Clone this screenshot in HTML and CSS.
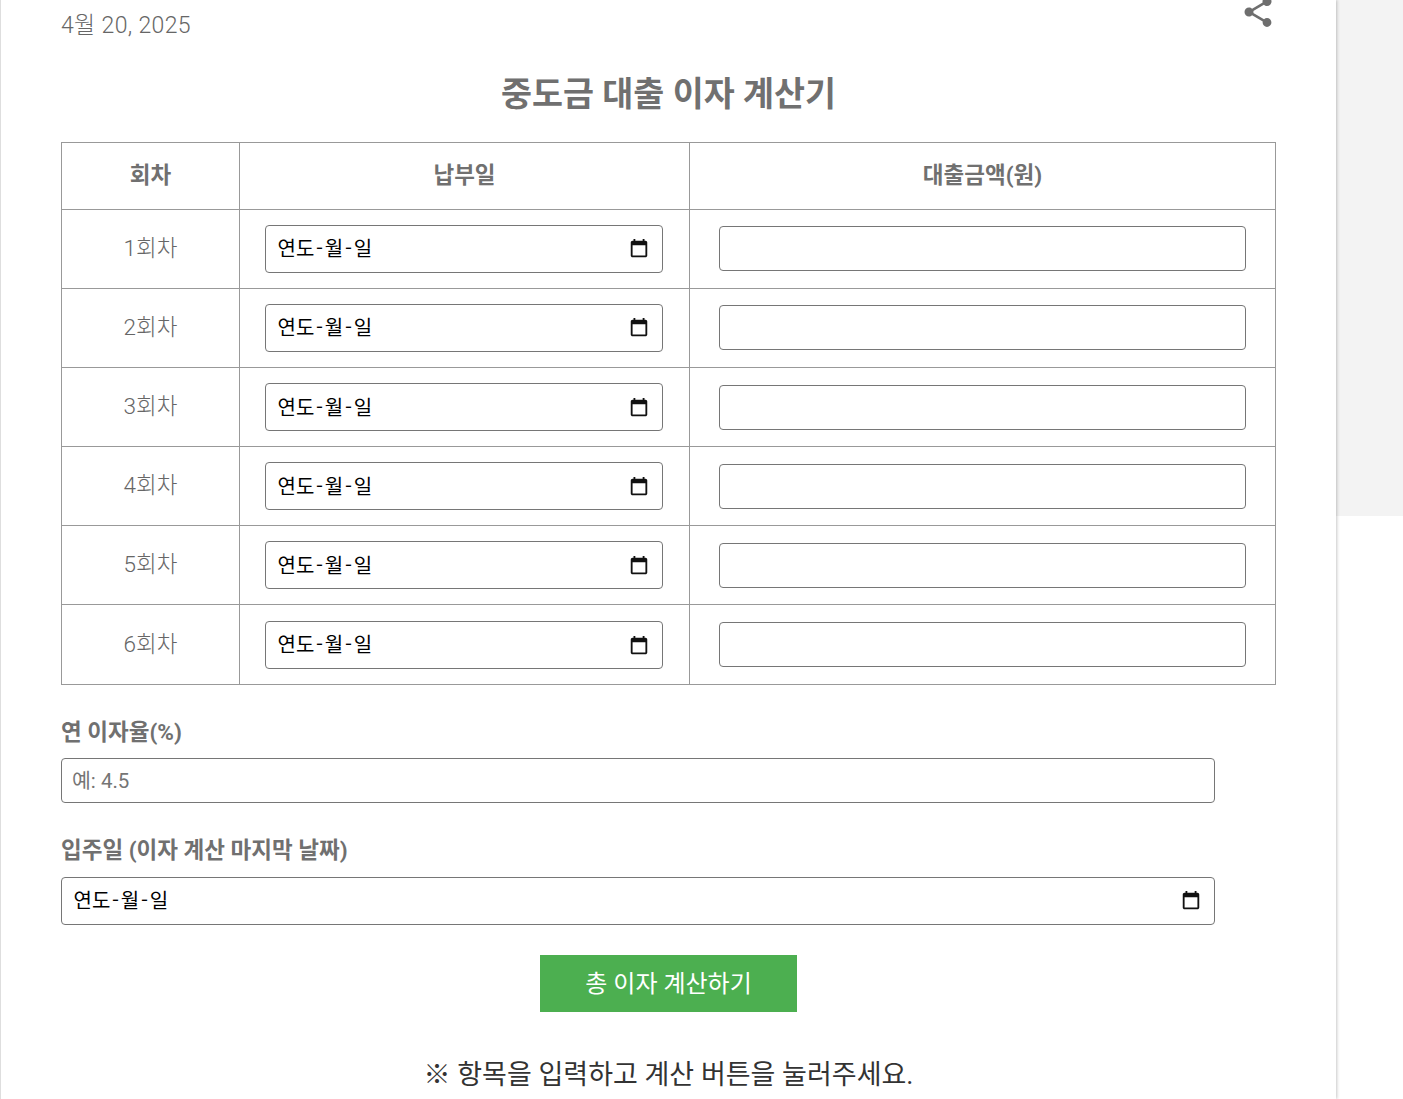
FILE: index.html
```html
<!DOCTYPE html>
<html lang="ko">
<head>
<meta charset="utf-8">
<title>중도금 대출 이자 계산기</title>
<link rel="stylesheet" href="styles.css">
</head>
<body>
<svg class="sprite" width="0" height="0" aria-hidden="true">
  <symbol id="cal" viewBox="0 0 24 24"><path d="M19 3h-1V1h-2v2H8V1H6v2H5c-1.11 0-2 .9-2 2v14c0 1.1.89 2 2 2h14c1.1 0 2-.9 2-2V5c0-1.1-.9-2-2-2zm0 16H5V8h14v11z"/></symbol>
</svg>
<div class="layout">
  <main class="post">
    <header class="post-head">
      <span class="post-date">4월 20, 2025</span>
      <svg class="share" viewBox="0 0 24 24"><path d="M18 16.08c-.76 0-1.44.3-1.96.77L8.91 12.7c.05-.23.09-.46.09-.7s-.04-.47-.09-.7l7.05-4.11c.54.5 1.25.81 2.04.81 1.66 0 3-1.34 3-3s-1.34-3-3-3-3 1.34-3 3c0 .24.04.47.09.7L8.04 9.81C7.5 9.31 6.79 9 6 9c-1.66 0-3 1.34-3 3s1.34 3 3 3c.79 0 1.5-.31 2.04-.81l7.12 4.16c-.05.21-.08.43-.08.65 0 1.61 1.31 2.92 2.92 2.92 1.61 0 2.92-1.31 2.92-2.92s-1.31-2.92-2.92-2.92z"/></svg>
    </header>
    <h2 class="calc-title">중도금 대출 이자 계산기</h2>
    <table class="calc-table">
      <colgroup><col class="c1"><col class="c2"><col class="c3"></colgroup>
      <thead>
        <tr><th>회차</th><th>납부일</th><th>대출금액(원)</th></tr>
      </thead>
      <tbody>
        <tr><td class="round">1회차</td><td><div class="date-field"><span class="date-text">연도<i class="sep">-</i>월<i class="sep">-</i>일</span><svg class="cal"><use href="#cal"/></svg></div></td><td><input class="text-field" type="text"></td></tr>
        <tr><td class="round">2회차</td><td><div class="date-field"><span class="date-text">연도<i class="sep">-</i>월<i class="sep">-</i>일</span><svg class="cal"><use href="#cal"/></svg></div></td><td><input class="text-field" type="text"></td></tr>
        <tr><td class="round">3회차</td><td><div class="date-field"><span class="date-text">연도<i class="sep">-</i>월<i class="sep">-</i>일</span><svg class="cal"><use href="#cal"/></svg></div></td><td><input class="text-field" type="text"></td></tr>
        <tr><td class="round">4회차</td><td><div class="date-field"><span class="date-text">연도<i class="sep">-</i>월<i class="sep">-</i>일</span><svg class="cal"><use href="#cal"/></svg></div></td><td><input class="text-field" type="text"></td></tr>
        <tr><td class="round">5회차</td><td><div class="date-field"><span class="date-text">연도<i class="sep">-</i>월<i class="sep">-</i>일</span><svg class="cal"><use href="#cal"/></svg></div></td><td><input class="text-field" type="text"></td></tr>
        <tr><td class="round">6회차</td><td><div class="date-field"><span class="date-text">연도<i class="sep">-</i>월<i class="sep">-</i>일</span><svg class="cal"><use href="#cal"/></svg></div></td><td><input class="text-field" type="text"></td></tr>
      </tbody>
    </table>
    <label class="field-label rate-label">연 이자율(%)</label>
    <input class="text-field wide" type="text" placeholder="예: 4.5">
    <label class="field-label end-label">입주일 (이자 계산 마지막 날짜)</label>
    <div class="date-field wide"><span class="date-text">연도<i class="sep">-</i>월<i class="sep">-</i>일</span><svg class="cal"><use href="#cal"/></svg></div>
    <div class="actions"><button class="calc-btn" type="button">총 이자 계산하기</button></div>
    <p class="result">※ 항목을 입력하고 계산 버튼을 눌러주세요.</p>
  </main>
  <aside class="side"></aside>
</div>
</body>
</html>
```

FILE: styles.css
```css
* { box-sizing: border-box; }
html, body { margin: 0; height: 100%; overflow: hidden; background: #fff; }
body { font-family: Roboto, "Noto Sans CJK KR", sans-serif; color: #666; }
.sprite { position: absolute; }
.layout { display: flex; align-items: flex-start; height: 1099px; overflow: hidden; }
.post {
  width: 1336px;
  height: 1099px;
  flex: none;
  padding: 0 60px 0 60px;
  background: #fff;
  border-left: 1px solid #dedede;
  box-shadow: 1px 0 3px rgba(0, 0, 0, .22);
  position: relative;
  z-index: 1;
}
.side { flex: 1; height: 516px; background: #f3f3f3; }
.post-head { display: flex; justify-content: space-between; height: 50px; margin-top: -6px; }
.post-date { font-size: 23px; font-weight: 300; line-height: 26px; margin-top: 19px; letter-spacing: .35px; color: #666; }
.share { width: 36px; height: 36px; fill: #6e6e6e; }
.calc-title { margin: 29px 0 0; text-align: center; font-size: 33.7px; line-height: 44px; font-weight: 700; color: #707070; height: 69px; }
.calc-table { width: 1214px; border-collapse: collapse; table-layout: fixed; }
.c1 { width: 178px; }
.c2 { width: 450px; }
.c3 { width: 586px; }
.calc-table th, .calc-table td { border: 1px solid #999; text-align: center; font-size: 22.5px; padding: 0; }
.calc-table th { height: 67px; font-weight: 700; padding-bottom: 6px; color: #707070; }
.calc-table td { height: 79px; font-weight: 300; }
.calc-table tr:last-child td { height: 80px; }
.calc-table .round { padding-bottom: 6px; }
.calc-table tr:nth-child(-n+2) .text-field { margin-bottom: 2px; }
.calc-table tr:nth-child(n+3) .date-text { margin-top: -2px; }
.calc-table tr:nth-child(n+3) .cal { margin-top: 2px; }
.date-field {
  display: flex; align-items: center; justify-content: space-between;
  width: 398px; height: 48px; margin-left: 25px; padding: 0 12.5px 0 11.5px;
  border: 1px solid #767676; border-radius: 4px;
  color: #000; font-size: 20px; font-weight: 400; background: #fff;
}
.date-text { margin-top: -4px; }
.sep { font-style: normal; font-family: "Noto Sans CJK KR", sans-serif; margin: 0 1.75px; }
.cal { width: 22px; height: 22px; fill: #111; flex: none; }
.text-field {
  display: block; width: 527px; height: 45px; margin-left: 29px; padding: 0 10px;
  border: 1px solid #767676; border-radius: 4px;
  font-family: inherit; font-size: 20.5px; background: #fff;
}
.field-label { display: block; font-size: 22.5px; font-weight: 700; line-height: 30px; color: #707070; }
.rate-label { margin-top: 32px; height: 41px; }
.end-label { margin-top: 32px; height: 42px; }
.text-field.wide { width: 1154px; margin-left: 0; }
.date-field.wide { width: 1154px; margin-left: 0; }
.text-field::placeholder { color: #757575; }
.actions { display: flex; justify-content: center; margin-top: 30px; }
.calc-btn { width: 257px; height: 57px; background: #4caf50; color: #fff; border: 0; font-family: inherit; font-size: 24px; padding: 0 0 4px; }
.result { margin: 41px 0 0; text-align: center; font-size: 27px; line-height: 44px; color: #333; font-weight: 400; }
```
